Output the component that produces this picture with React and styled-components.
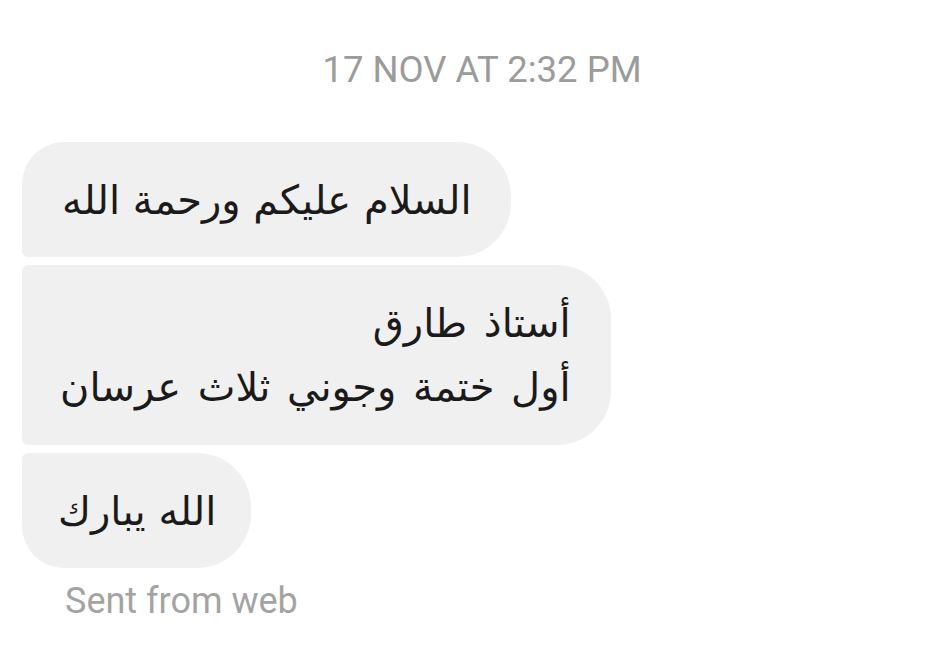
import React from "react";
import styled, { createGlobalStyle } from "styled-components";

const Global = createGlobalStyle`
  html, body { margin: 0; padding: 0; background: #ffffff; }
  body { font-family: Roboto, "Liberation Sans", sans-serif; }
`;

const Page = styled.div`
  width: 944px;
  height: 657px;
  display: flex;
  flex-direction: column;
  background: #fff;
  overflow: hidden;
`;

const Timestamp = styled.div`
  text-align: center;
  color: #9b9b9b;
  font-size: 36.5px;
  padding-top: 49px;
  padding-left: 20px;
  line-height: 42px;
`;

const Thread = styled.div`
  display: flex;
  flex-direction: column;
  align-items: flex-start;
  gap: 8px;
  padding: 51px 0 0 22px;
`;

const radii = {
  first: "42px 54px 54px 6px",
  middle: "6px 54px 54px 6px",
  last: "6px 54px 54px 42px",
};

const Bubble = styled.div`
  background: #f0f0f0;
  border-radius: ${(p) => radii[p.$pos]};
  padding: ${(p) => p.$pt}px ${(p) => p.$pr}px ${(p) => p.$pb}px ${(p) => p.$pl}px;
  direction: rtl;
  text-align: right;
  font-family: "DejaVu Sans", "Noto Sans", sans-serif;
  font-size: 40px;
  line-height: 64px;
  word-spacing: ${(p) => p.$ws || 0}px;
  color: #1a1a1a;
`;

const Footer = styled.div`
  color: #a3a3a3;
  font-size: 36px;
  margin: 12px 0 0 65px;
  line-height: 42px;
`;

export default function App() {
  return (
    <Page>
      <Global />
      <Timestamp>17 NOV AT 2:32 PM</Timestamp>
      <Thread>
        <Bubble $pos="first" $pt={26} $pb={25} $pl={40} $pr={39}>السلام عليكم ورحمة الله</Bubble>
        <Bubble $pos="middle" $pt={26} $pb={26} $pl={38} $pr={40} $ws={4}>
          أستاذ طارق
          <br />
          أول ختمة وجوني ثلاث عرسان
        </Bubble>
        <Bubble $pos="last" $pt={26} $pb={25} $pl={36} $pr={35}>الله يبارك</Bubble>
      </Thread>
      <Footer>Sent from web</Footer>
    </Page>
  );
}
